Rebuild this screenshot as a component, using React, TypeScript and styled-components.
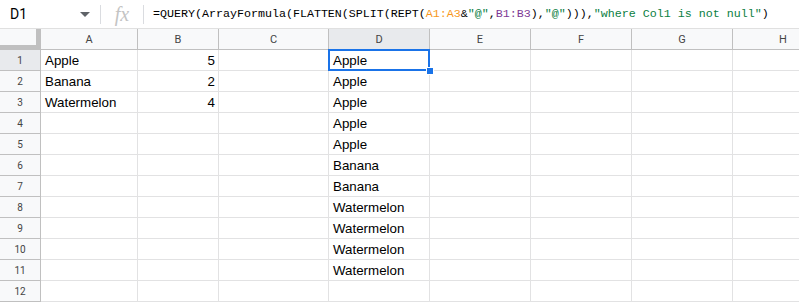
import React from "react"
import styled, { createGlobalStyle } from "styled-components"

const GlobalStyle = createGlobalStyle`
  html, body {
    margin: 0;
    padding: 0;
    background: #fff;
    overflow: hidden;
  }
`

const columns = ["A", "B", "C", "D", "E", "F", "G", "H"]

const colA = ["Apple", "Banana", "Watermelon"]
const colB = ["5", "2", "4"]
const colD = [
  "Apple",
  "Apple",
  "Apple",
  "Apple",
  "Apple",
  "Banana",
  "Banana",
  "Watermelon",
  "Watermelon",
  "Watermelon",
  "Watermelon",
]

const formula: { text: string; kind?: "range1" | "range2" | "str" }[] = [
  { text: "=QUERY(ArrayFormula(FLATTEN(SPLIT(REPT(" },
  { text: "A1:A3", kind: "range1" },
  { text: "&" },
  { text: "\"@\"", kind: "str" },
  { text: "," },
  { text: "B1:B3", kind: "range2" },
  { text: ")," },
  { text: "\"@\"", kind: "str" },
  { text: "))),"},
  { text: "\"where Col1 is not null\"", kind: "str" },
  { text: ")" },
]

const tokenColor = {
  range1: "#f7981d",
  range2: "#7e3794",
  str: "#0b8043",
}

export default function App() {
  return (
    <>
      <GlobalStyle />
      <S.Page>
        <S.FormulaBar>
          <S.NameBox>
            <S.CellRef>D1</S.CellRef>
            <S.Caret viewBox="0 0 10 5" width="10" height="5">
              <path d="M0 0 L10 0 L5 5 Z" fill="#5f6368" />
            </S.Caret>
          </S.NameBox>
          <S.Divider />
          <S.Fx>fx</S.Fx>
          <S.Divider />
          <S.Formula>
            {formula.map((t, i) => (
              <S.Token key={i} $color={t.kind ? tokenColor[t.kind] : "#000"}>
                {t.text}
              </S.Token>
            ))}
          </S.Formula>
        </S.FormulaBar>

        <S.Grid>
          <S.Corner />
          {columns.map((c) => (
            <S.ColHeader key={c} $active={c === "D"}>
              {c}
            </S.ColHeader>
          ))}

          {Array.from({ length: 12 }).map((_, r) => (
            <React.Fragment key={r}>
              <S.RowHeader $active={r === 0}>{r + 1}</S.RowHeader>
              {columns.map((c) => {
                let value = ""
                let right = false
                if (c === "A") value = colA[r] ?? ""
                if (c === "B") {
                  value = colB[r] ?? ""
                  right = true
                }
                if (c === "D") value = colD[r] ?? ""
                const selected = c === "D" && r === 0
                return (
                  <S.Cell key={c} $right={right}>
                    {value}
                    {selected && (
                      <S.Selection>
                        <S.Handle />
                      </S.Selection>
                    )}
                  </S.Cell>
                )
              })}
            </React.Fragment>
          ))}
        </S.Grid>
      </S.Page>
    </>
  )
}

const S = {
  Page: styled.div`
    width: 799px;
    height: 303px;
    overflow: hidden;
    background: #fff;
  `,
  FormulaBar: styled.div`
    display: flex;
    align-items: center;
    height: 28px;
    border-bottom: 1px solid #e0e0e0;
    background: #fff;
  `,
  NameBox: styled.div`
    display: flex;
    align-items: center;
    justify-content: space-between;
    width: 92px;
    padding-left: 10px;
    box-sizing: border-box;
  `,
  CellRef: styled.span`
    font-family: Roboto, "Liberation Sans", sans-serif;
    font-size: 14px;
    color: #000;
  `,
  Caret: styled.svg`
    display: block;
    margin-right: 2px;
  `,
  Divider: styled.div`
    width: 1px;
    height: 19px;
    background: #dadce0;
    margin-left: 8px;
  `,
  Fx: styled.span`
    width: 34px;
    text-align: center;
    font-family: "Liberation Serif", serif;
    font-style: italic;
    font-size: 20px;
    color: #c4c4c4;
    line-height: 1;
    margin-left: 4px;
    margin-right: -4px;
  `,
  Formula: styled.div`
    margin-left: 9px;
    font-family: "Liberation Mono", monospace;
    font-size: 11.67px;
    white-space: nowrap;
    color: #000;
  `,
  Token: styled.span<{ $color: string }>`
    color: ${(p) => p.$color};
  `,
  Grid: styled.div`
    display: grid;
    grid-template-columns: 41px 97px 81px 110px 101px 101px 101px 101px 101px;
    grid-template-rows: 21px repeat(12, 21px);
    width: max-content;
  `,
  Corner: styled.div`
    box-sizing: border-box;
    background: #f8f9fa;
    border-right: 5px solid #c0c0c0;
    border-bottom: 5px solid #c0c0c0;
  `,
  ColHeader: styled.div<{ $active: boolean }>`
    box-sizing: border-box;
    display: flex;
    align-items: center;
    justify-content: center;
    background: ${(p) => (p.$active ? "#e8eaed" : "#f8f9fa")};
    border-right: 1px solid #c0c0c0;
    border-bottom: 1px solid #c0c0c0;
    font-family: Roboto, "Liberation Sans", sans-serif;
    font-size: 11px;
    color: #444;
  `,
  RowHeader: styled.div<{ $active: boolean }>`
    box-sizing: border-box;
    display: flex;
    align-items: center;
    justify-content: center;
    background: ${(p) => (p.$active ? "#e8eaed" : "#f8f9fa")};
    border-right: 1px solid #c0c0c0;
    border-bottom: 1px solid #c0c0c0;
    font-family: Roboto, "Liberation Sans", sans-serif;
    font-size: 10px;
    color: #444;
  `,
  Cell: styled.div<{ $right: boolean }>`
    position: relative;
    box-sizing: border-box;
    display: flex;
    align-items: center;
    justify-content: ${(p) => (p.$right ? "flex-end" : "flex-start")};
    padding: 1px 3px 0 4px;
    border-right: 1px solid #e2e2e3;
    border-bottom: 1px solid #e2e2e3;
    font-family: "Liberation Sans", Arial, sans-serif;
    font-size: 13.33px;
    color: #000;
    white-space: nowrap;
  `,
  Selection: styled.div`
    position: absolute;
    left: -1px;
    top: -1px;
    right: -1px;
    bottom: -1px;
    border: 2px solid #1a73e8;
    pointer-events: none;
    z-index: 2;
  `,
  Handle: styled.div`
    position: absolute;
    right: -6px;
    bottom: -6px;
    width: 6px;
    height: 6px;
    background: #1a73e8;
    border: 1px solid #fff;
  `,
}
